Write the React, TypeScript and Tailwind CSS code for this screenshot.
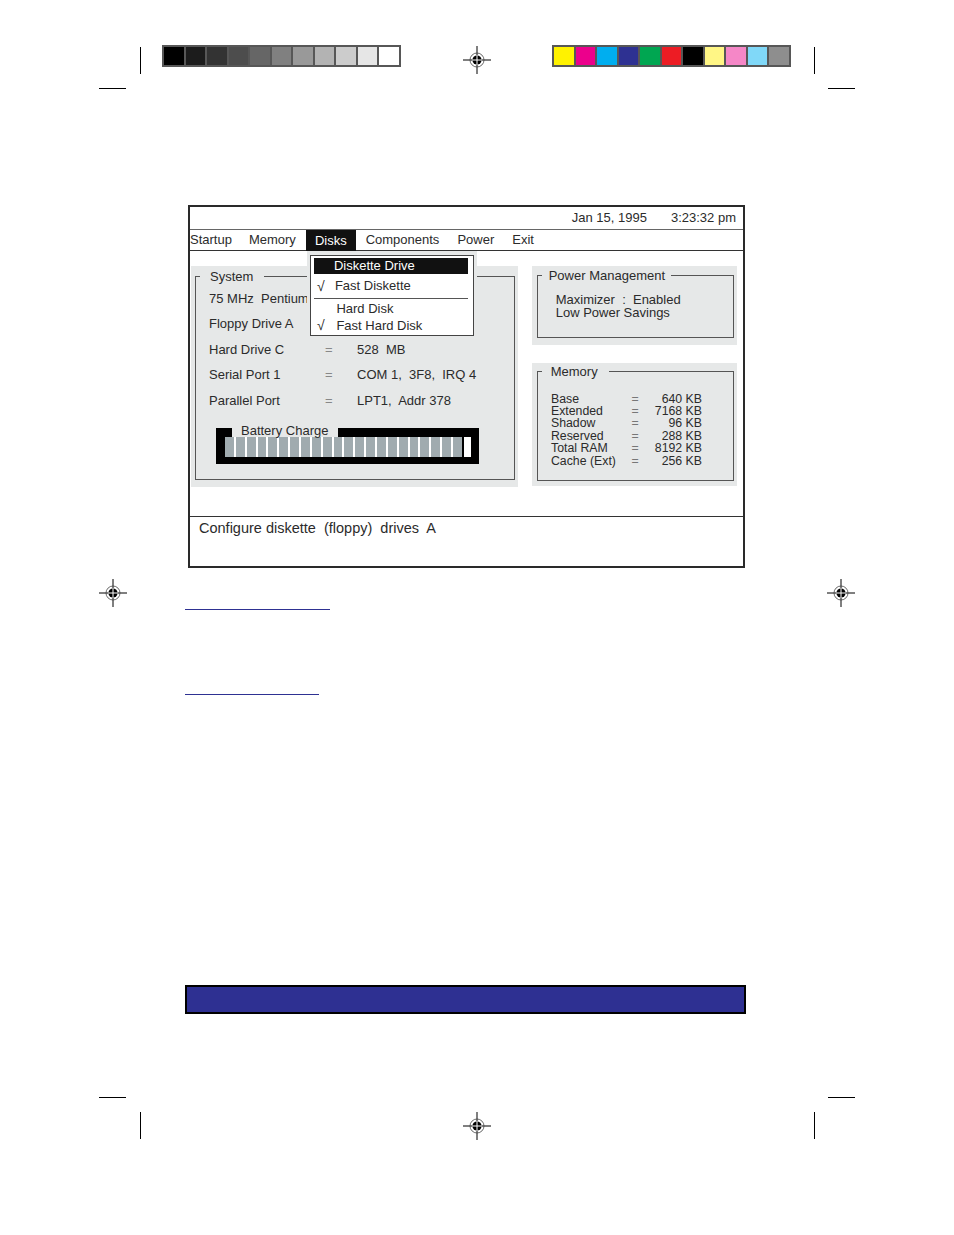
import React from 'react';

const GRAYS = ['#000000', '#1c1c1c', '#333333', '#4d4d4d', '#666666', '#808080', '#999999', '#b3b3b3', '#cccccc', '#e6e6e6', '#ffffff'];
const COLORS = ['#fff200', '#ec008c', '#00aeef', '#2e3192', '#00a651', '#ed1c24', '#000000', '#fff685', '#f587c7', '#80d8f8', '#8e8e8e'];

const SYSTEM_ROWS = [
  { label: '75 MHz  Pentium', eq: '', value: '' },
  { label: 'Floppy Drive A', eq: '', value: '' },
  { label: 'Hard Drive C', eq: '=', value: '528  MB' },
  { label: 'Serial Port 1', eq: '=', value: 'COM 1,  3F8,  IRQ 4' },
  { label: 'Parallel Port', eq: '=', value: 'LPT1,  Addr 378' },
];

const MEMORY_ROWS = [
  ['Base', '640 KB'],
  ['Extended', '7168 KB'],
  ['Shadow', '96 KB'],
  ['Reserved', '288 KB'],
  ['Total RAM', '8192 KB'],
  ['Cache (Ext)', '256 KB'],
];

// print registration target, centred on (x, y)
const Target = ({ x, y }: { x: number; y: number }) => (
  <svg
    className="absolute"
    style={{ left: x - 15, top: y - 15 }}
    width="30"
    height="30"
    viewBox="0 0 30 30"
  >
    <line x1="1" y1="15" x2="29" y2="15" stroke="#000" strokeWidth="1" />
    <line x1="15" y1="1" x2="15" y2="29" stroke="#000" strokeWidth="1" />
    <circle cx="15" cy="15" r="7" fill="none" stroke="#444" strokeWidth="0.8" />
    <circle cx="15" cy="15" r="4.6" fill="#000" />
    <line x1="10" y1="15" x2="20" y2="15" stroke="#fff" strokeWidth="1" />
    <line x1="15" y1="10" x2="15" y2="20" stroke="#fff" strokeWidth="1" />
  </svg>
);

const Strip = ({ colors, className }: { colors: string[]; className: string }) => (
  <div className={`absolute flex gap-[2px] p-[2px] bg-[#575757] h-[22px] w-[239px] ${className}`}>
    {colors.map((c, i) => (
      <div key={i} className="flex-1" style={{ backgroundColor: c }} />
    ))}
  </div>
);

const PrintMarks = () => (
  <>
    <Strip colors={GRAYS} className="left-[162px] top-[45px]" />
    <Strip colors={COLORS} className="left-[552px] top-[45px]" />

    {/* crop marks */}
    <div className="absolute left-[140px] top-[47px] w-px h-[27px] bg-black" />
    <div className="absolute left-[99px] top-[88px] w-[27px] h-px bg-black" />
    <div className="absolute left-[814px] top-[47px] w-px h-[27px] bg-black" />
    <div className="absolute left-[828px] top-[88px] w-[27px] h-px bg-black" />
    <div className="absolute left-[99px] top-[1097px] w-[27px] h-px bg-black" />
    <div className="absolute left-[140px] top-[1112px] w-px h-[27px] bg-black" />
    <div className="absolute left-[828px] top-[1097px] w-[27px] h-px bg-black" />
    <div className="absolute left-[814px] top-[1112px] w-px h-[27px] bg-black" />

    <Target x={477} y={60} />
    <Target x={113} y={593} />
    <Target x={841} y={593} />
    <Target x={477} y={1126} />
  </>
);

const DisksMenu = () => (
  <div className="absolute left-[1px] top-[21px] z-10 w-[170px] h-[89px] bg-[#e6e8e8] pl-[3px] pt-[4px]">
    <div className="w-[164px] h-[81px] bg-white border-[1.5px] border-[#444] text-[#2b2b2b]">
      <div className="ml-[3.5px] mr-[4.5px] mt-[1.5px] h-[16px] bg-[#111] text-white pl-[19.5px] leading-[16px]">
        Diskette Drive
      </div>
      <div className="h-[22px] pt-[3px] flex items-center pl-[6px]">
        <span className="w-[18px] text-[14px]">√</span>
        <span>Fast Diskette</span>
      </div>
      <div className="ml-[3.5px] mr-[4.5px] mt-[2px] mb-[1.5px] h-px bg-[#555]" />
      <div className="h-[17px] flex items-center pl-[25.5px]">Hard Disk</div>
      <div className="h-[17px] flex items-center pl-[6px]">
        <span className="w-[19.5px] text-[14px]">√</span>
        <span>Fast Hard Disk</span>
      </div>
    </div>
  </div>
);

const BatteryCharge = () => (
  <div className="ml-[20px] mt-[14.75px] w-[263px]">
    <div className="flex h-[9px]">
      <div className="w-[16px] bg-black" />
      <div className="relative z-[1] pl-[9px] pr-[10px] leading-[5px] whitespace-nowrap">Battery Charge</div>
      <div className="flex-1 bg-black" />
    </div>
    <div className="flex h-[27px] border-l-[9px] border-r-[8px] border-b-[7px] border-black">
      <div className="flex-1 flex gap-[2px] bg-white">
        {Array.from({ length: 22 }).map((_, i) => (
          <div key={i} className="flex-1 bg-[#a0abaf]" />
        ))}
      </div>
      <div className="w-[2px] bg-black" />
      <div className="w-[7px] bg-white" />
    </div>
  </div>
);

const SystemPanel = () => (
  <div className="w-[327px] h-[221px] bg-[#e6e8e8] pt-[2.5px] pl-[4px] pr-[3px] shrink-0">
    <fieldset className="h-[211.5px] border border-[#555]">
      <legend className="ml-[4px] pl-[10px] pr-[11px] leading-[15px]">System</legend>
      <div className="pl-[13px] mt-[2.25px]">
        {SYSTEM_ROWS.map(r => (
          <div key={r.label} className="h-[25.5px] flex items-center whitespace-pre">
            <span className="w-[116px]">{r.label}</span>
            <span className="w-[32px] text-[#888]">{r.eq}</span>
            <span>{r.value}</span>
          </div>
        ))}
      </div>
      <BatteryCharge />
    </fieldset>
  </div>
);

const PowerPanel = () => (
  <div className="w-[205px] h-[79px] bg-[#e6e8e8] pt-[2px] pl-[4.7px] pr-[3px]">
    <fieldset className="h-[70px] border border-[#555]">
      <legend className="ml-[4px] pl-[7px] pr-[6px] leading-[15px]">Power Management</legend>
      <div className="pl-[18px] mt-[10px] leading-[13.3px] whitespace-pre">
        <div>Maximizer  :  Enabled</div>
        <div>Low Power Savings</div>
      </div>
    </fieldset>
  </div>
);

const MemoryPanel = () => (
  <div className="w-[205px] h-[123.5px] bg-[#e6e8e8] pt-[1px] pl-[4.7px] pr-[3px]">
    <fieldset className="h-[117.5px] border border-[#555]">
      <legend className="ml-[4px] pl-[9px] pr-[11px] leading-[15px]">Memory</legend>
      <div className="pl-[13.3px] mt-[14px] text-[12.3px] leading-[12.4px]">
        {MEMORY_ROWS.map(([k, v]) => (
          <div key={k} className="flex">
            <span className="w-[79px]">{k}</span>
            <span className="w-[10px] text-center text-[#777]">=</span>
            <span className="w-[62px] text-right">{v}</span>
          </div>
        ))}
      </div>
    </fieldset>
  </div>
);

const SetupScreen = () => (
  <div className="w-[557px] h-[363px] border-2 border-[#2a2a2a] flex flex-col text-[13px]">
    <div className="h-[23px] border-b border-[#666] flex items-center justify-end gap-[24px] pr-[7px] shrink-0">
      <span>Jan 15, 1995</span>
      <span>3:23:32 pm</span>
    </div>

    <div className="h-[21px] border-b border-[#333] flex items-stretch shrink-0">
      <span className="flex items-center">Startup</span>
      <span className="flex items-center ml-[17px]">Memory</span>
      <div className="relative ml-[10px] -mb-px px-[9px] bg-[#111] text-white flex items-center">
        Disks
        <DisksMenu />
      </div>
      <span className="flex items-center ml-[10px]">Components</span>
      <span className="flex items-center ml-[18px]">Power</span>
      <span className="flex items-center ml-[18px]">Exit</span>
    </div>

    <div className="h-[266px] border-b border-[#333] flex gap-[14px] pl-[1px] pt-[15px] shrink-0">
      <SystemPanel />
      <div className="flex flex-col gap-[17.6px]">
        <PowerPanel />
        <MemoryPanel />
      </div>
    </div>

    <div className="pl-[9px] pt-[2.5px] text-[14.5px] leading-[17px] whitespace-pre">
      Configure diskette  (floppy)  drives  A
    </div>
  </div>
);

export default function App() {
  return (
    <div className="relative w-[954px] h-[1235px] bg-white overflow-hidden text-[#2b2b2b] font-['Liberation_Sans',Arial,sans-serif]">
      <PrintMarks />

      <div className="pt-[205px] pl-[185px]">
        <div className="pl-[3px]">
          <SetupScreen />
        </div>
        <div className="mt-[41px] w-[145px] h-px bg-[#2e3192]" />
        <div className="mt-[84px] w-[134px] h-px bg-[#2e3192]" />
        <div className="mt-[290px] w-[561px] h-[29px] border-2 border-black bg-[#2e3092]" />
      </div>
    </div>
  );
}
